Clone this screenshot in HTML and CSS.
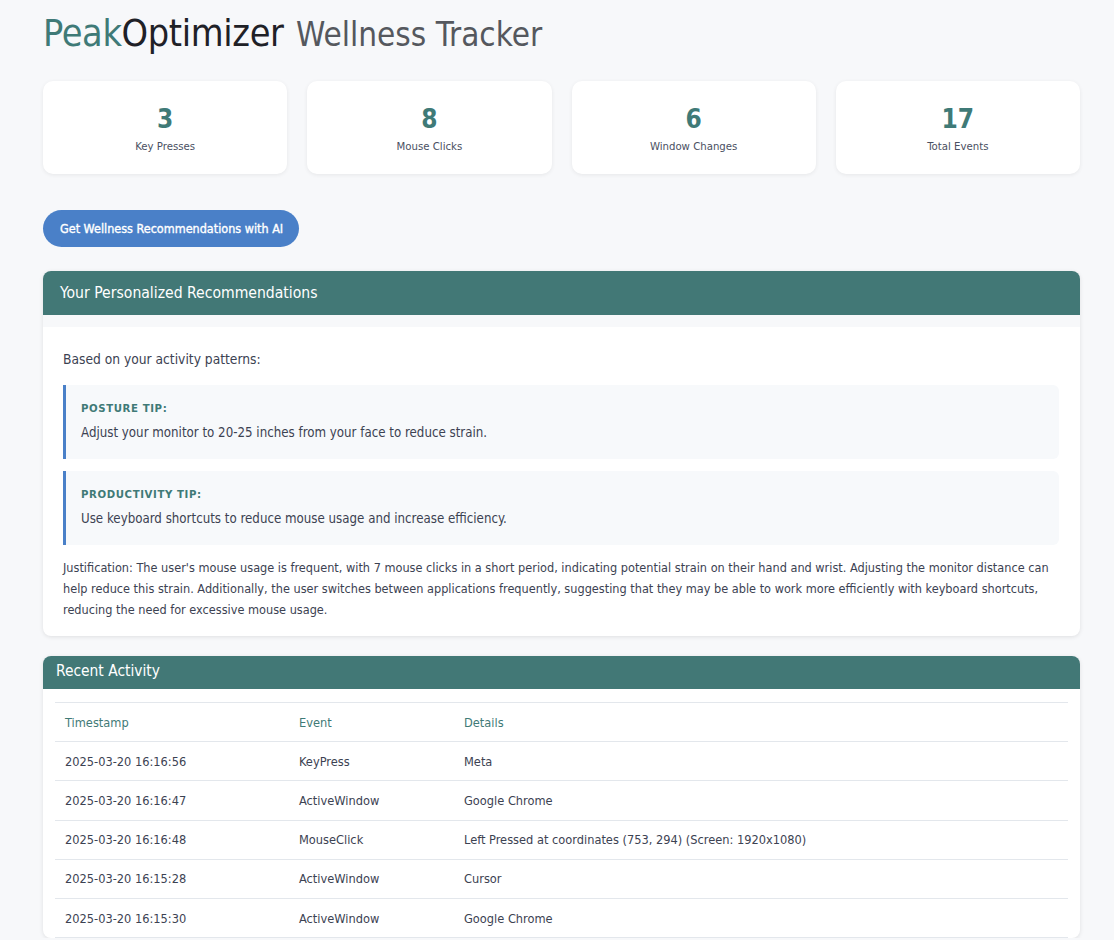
FILE: index.html
```html
<!DOCTYPE html>
<html>
<head>
<meta charset="utf-8">
<link rel="stylesheet" href="styles.css">
</head>
<body>
<div class="page">
  <h1 class="title"><span class="peak">Peak</span><span class="opt">Optimizer</span> <span class="sub">Wellness Tracker</span></h1>

  <div class="stats">
    <div class="stat"><div class="num">3</div><div class="label">Key Presses</div></div>
    <div class="stat"><div class="num">8</div><div class="label">Mouse Clicks</div></div>
    <div class="stat"><div class="num">6</div><div class="label">Window Changes</div></div>
    <div class="stat"><div class="num">17</div><div class="label">Total Events</div></div>
  </div>

  <button class="ai-btn">Get Wellness Recommendations with AI</button>

  <section class="panel recs">
    <div class="panel-head">Your Personalized Recommendations</div>
    <div class="strip"></div>
    <div class="recs-body">
      <p class="intro">Based on your activity patterns:</p>
      <div class="tip">
        <div class="tip-title">POSTURE TIP:</div>
        <div class="tip-text">Adjust your monitor to 20-25 inches from your face to reduce strain.</div>
      </div>
      <div class="tip">
        <div class="tip-title">PRODUCTIVITY TIP:</div>
        <div class="tip-text">Use keyboard shortcuts to reduce mouse usage and increase efficiency.</div>
      </div>
      <p class="just">Justification: The user's mouse usage is frequent, with 7 mouse clicks in a short period, indicating potential strain on their hand and wrist. Adjusting the monitor distance can help reduce this strain. Additionally, the user switches between applications frequently, suggesting that they may be able to work more efficiently with keyboard shortcuts, reducing the need for excessive mouse usage.</p>
    </div>
  </section>

  <section class="panel activity">
    <div class="panel-head small">Recent Activity</div>
    <div class="table-wrap">
      <table class="log">
        <thead>
          <tr><th class="c1">Timestamp</th><th class="c2">Event</th><th>Details</th></tr>
        </thead>
        <tbody>
          <tr><td>2025-03-20 16:16:56</td><td>KeyPress</td><td>Meta</td></tr>
          <tr><td>2025-03-20 16:16:47</td><td>ActiveWindow</td><td>Google Chrome</td></tr>
          <tr><td>2025-03-20 16:16:48</td><td>MouseClick</td><td>Left Pressed at coordinates (753, 294) (Screen: 1920x1080)</td></tr>
          <tr><td>2025-03-20 16:15:28</td><td>ActiveWindow</td><td>Cursor</td></tr>
          <tr><td>2025-03-20 16:15:30</td><td>ActiveWindow</td><td>Google Chrome</td></tr>
        </tbody>
      </table>
    </div>
  </section>
</div>
</body>
</html>
```

FILE: styles.css
```css
* { box-sizing: border-box; }
html, body { margin: 0; padding: 0; }
body {
  background: #f7f8fa;
  font-family: "DejaVu Sans Condensed", "DejaVu Sans", sans-serif;
  color: #3c4252;
  font-size: 13px;
}
.page {
  padding: 13px 34px 0 43px;
}
.title {
  margin: 0;
  font-weight: normal;
  line-height: 40px;
  white-space: nowrap;
}
.peak, .opt {
  font-size: 37.5px;
  letter-spacing: -0.35px;
}
.peak { color: #3f7a77; }
.opt { color: #1f2127; }
.sub { color: #55585e; font-size: 33px; letter-spacing: 0; margin-left: 5px; }

.stats {
  display: grid;
  grid-template-columns: repeat(4, 1fr);
  gap: 20px;
  margin-top: 24px;
}
.stat {
  background: #fff;
  border-radius: 10px;
  box-shadow: 0 1px 4px rgba(0,0,0,0.07);
  height: 93px;
  display: flex;
  flex-direction: column;
  align-items: center;
  padding-top: 23px;
}
.num {
  font-size: 26px;
  font-weight: bold;
  color: #3f7a77;
  line-height: 30px;
}
.label {
  font-size: 11.3px;
  color: #4a5062;
  margin-top: 6px;
}

.ai-btn {
  display: block;
  margin-top: 36px;
  height: 37px;
  padding: 0 16px 0 17px;
  border: none;
  border-radius: 19px;
  background: #4a80c8;
  color: #fff;
  font-family: inherit;
  font-size: 12.5px;
  font-weight: normal;
  -webkit-text-stroke: 0.35px #fff;
}

.panel {
  background: #fff;
  border-radius: 8px;
  box-shadow: 0 1px 4px rgba(0,0,0,0.1);
  overflow: hidden;
}
.recs { margin-top: 24px; }
.panel-head {
  background: #427876;
  color: #fff;
  height: 44px;
  line-height: 44px;
  padding-left: 17px;
  font-size: 15.6px;
}
.panel-head.small {
  height: 33px;
  line-height: 31px;
  padding-left: 13px;
  font-size: 15.4px;
}
.strip {
  height: 12px;
  background: #f7f8fa;
}
.recs-body {
  padding: 22px 21px 16px 20px;
}
.intro {
  margin: 0 0 16px;
  line-height: 20px;
  font-size: 13.7px;
}
.tip {
  background: #f7f9fb;
  border-left: 3px solid #4a80c8;
  border-radius: 0 6px 6px 0;
  padding: 16px 15px 17px 15px;
  margin-bottom: 12px;
}
.tip-title {
  font-size: 11.3px;
  font-weight: bold;
  color: #3f7a77;
  letter-spacing: 0.6px;
  line-height: 16px;
}
.tip-text {
  margin-top: 7px;
  line-height: 18px;
  font-size: 13.2px;
}
.just {
  margin: 11px 0 0;
  line-height: 21px;
  font-size: 12.6px;
}

.activity { margin-top: 20px; }
.table-wrap {
  padding: 13px 12px 0 12px;
}
.log {
  width: 100%;
  border-collapse: collapse;
}
.log th, .log td {
  text-align: left;
  font-weight: normal;
  padding: 0 10px;
  height: 39.2px;
  border-bottom: 1px solid #e3e7ec;
  font-size: 12.7px;
}
.log thead th {
  border-top: 1px solid #e3e7ec;
  color: #3f7a77;
}
.log .c1 { width: 234px; }
.log .c2 { width: 165px; }
```
